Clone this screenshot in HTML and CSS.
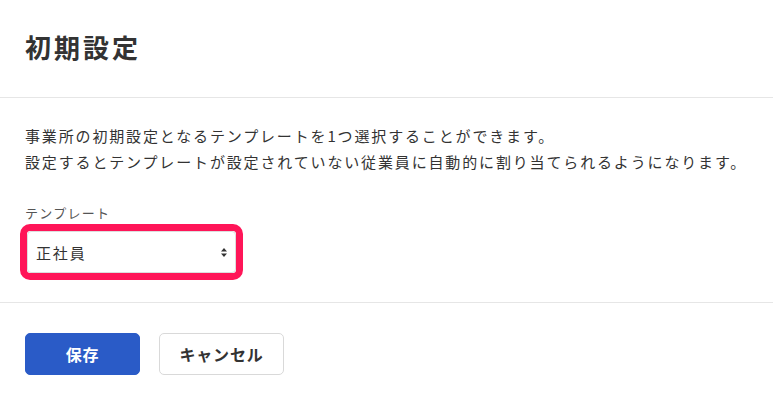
FILE: index.html
```html
<!DOCTYPE html>
<html lang="ja">
<head>
<meta charset="utf-8">
<title>初期設定</title>
<link rel="stylesheet" href="styles.css">
</head>
<body>
<div class="modal">
  <header class="modal-header">
    <h1 class="modal-title">初期設定</h1>
  </header>
  <section class="modal-body">
    <p class="desc">事業所の初期設定となるテンプレートを1つ選択することができます。<br>設定するとテンプレートが設定されていない従業員に自動的に割り当てられるようになります。</p>
    <label class="field-label">テンプレート</label>
    <div class="highlight">
      <div class="select">
        <span class="select-value">正社員</span>
        <svg class="select-arrow" width="6" height="9" viewBox="0 0 6 9"><path d="M3 0 L6 3.5 L0 3.5 Z M0 5.5 L6 5.5 L3 9 Z" fill="#333"/></svg>
      </div>
    </div>
  </section>
  <footer class="modal-footer">
    <button class="btn btn-primary">保存</button>
    <button class="btn btn-secondary">キャンセル</button>
  </footer>
</div>
</body>
</html>
```

FILE: styles.css
```css
html, body {
  margin: 0;
  padding: 0;
  background: #fff;
}
body {
  font-family: "Noto Sans CJK JP", "Noto Sans", sans-serif;
  color: #333;
}
.modal-header {
  height: 97px;
  padding: 0 25px;
  display: flex;
  align-items: center;
  border-bottom: 1px solid #e6e6e6;
  box-sizing: content-box;
}
.modal-title {
  margin: 0 0 4px;
  font-size: 26px;
  font-weight: 700;
  letter-spacing: 3px;
  color: #333;
  line-height: 1;
}
.modal-body {
  padding: 25px 25px 22px;
  border-bottom: 1px solid #e6e6e6;
}
.desc {
  margin: 0;
  font-size: 15px;
  line-height: 26px;
  letter-spacing: 1.85px;
  color: #333;
}
.field-label {
  display: block;
  margin-top: 28px;
  font-size: 13px;
  line-height: 20px;
  letter-spacing: 0.1em;
  color: #555;
}
.highlight {
  display: inline-block;
  margin-top: 1px;
  margin-left: -5px;
  border: 7px solid #ff1558;
  border-radius: 10px;
  padding: 0;
}
.select {
  width: 209px;
  height: 42px;
  box-sizing: border-box;
  border: 1px solid #ddd;
  border-radius: 4px;
  background: #fff;
  display: flex;
  align-items: center;
  justify-content: space-between;
  padding: 0 8px 0 8px;
}
.select-value {
  font-size: 15px;
  letter-spacing: 1.85px;
  color: #333;
}
.select-arrow {
  display: block;
}
.modal-footer {
  padding: 30px 25px;
  display: flex;
  gap: 19px;
}
.btn {
  height: 42px;
  border-radius: 5px;
  font-family: "Noto Sans CJK JP", "Noto Sans", sans-serif;
  font-size: 16px;
  font-weight: 700;
  letter-spacing: 0.05em;
  cursor: pointer;
}
.btn-primary {
  width: 115px;
  background: #2a5bc7;
  border: 1px solid #2a5bc7;
  color: #fff;
}
.btn-secondary {
  width: 125px;
  background: #fff;
  border: 1px solid #d9d9d9;
  color: #333;
}
```
